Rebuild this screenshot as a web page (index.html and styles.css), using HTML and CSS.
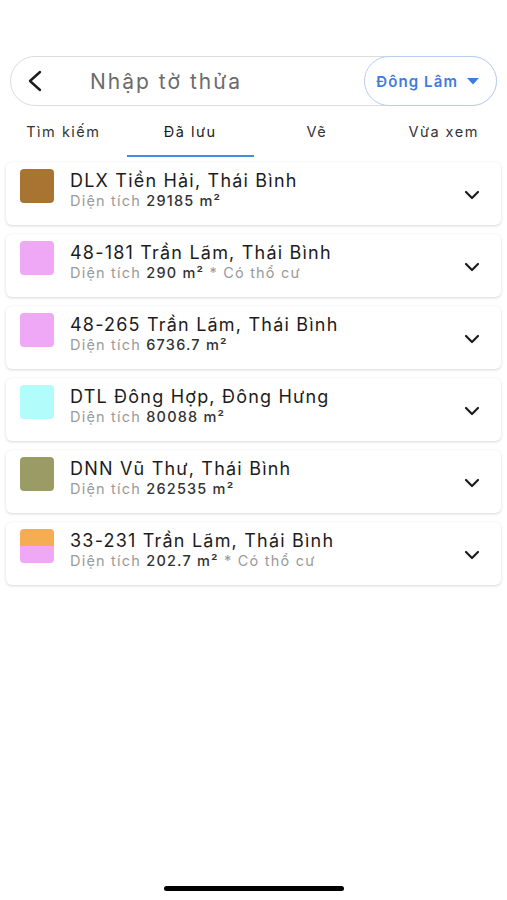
FILE: index.html
```html
<!DOCTYPE html>
<html lang="vi">
<head>
    <meta charset="UTF-8">
    <meta name="viewport" content="width=device-width, initial-scale=1.0">
    <title>Đã lưu</title>
    <link rel="stylesheet" href="styles.css">
</head>
<body>
    <div class="screen">
        <!-- Search bar -->
        <div class="search-bar">
            <button class="back-btn" aria-label="Quay lại">
                <svg width="16" height="22" viewBox="0 0 16 22"><path d="M13 2 L3 11 L13 20" fill="none" stroke="#1c1c1c" stroke-width="2.4" stroke-linecap="round" stroke-linejoin="round"/></svg>
            </button>
            <input class="search-input" type="text" placeholder="Nhập tờ thửa">
            <button class="area-btn">
                <span>Đông Lâm</span>
                <svg width="12" height="7" viewBox="0 0 12 7"><path d="M0 0 H12 L6 6.5 Z" fill="#3f7be0"/></svg>
            </button>
        </div>

        <!-- Tabs -->
        <div class="tabs">
            <div class="tab">Tìm kiếm</div>
            <div class="tab active">Đã lưu</div>
            <div class="tab">Vẽ</div>
            <div class="tab">Vừa xem</div>
        </div>

        <!-- Saved list -->
        <div class="list">
            <div class="card">
                <div class="card-main">
                    <div class="swatch" style="background: #a87432;"></div>
                    <div class="info">
                        <div class="title">DLX Tiền Hải, Thái Bình</div>
                        <div class="sub">Diện tích <b>29185 m²</b></div>
                    </div>
                </div>
                <svg class="chev" width="16" height="10" viewBox="0 0 16 10"><path d="M2 2 L8 8 L14 2" fill="none" stroke="#1c1c1c" stroke-width="2.2" stroke-linecap="round" stroke-linejoin="round"/></svg>
            </div>
            <div class="card">
                <div class="card-main">
                    <div class="swatch" style="background: #eea8f5;"></div>
                    <div class="info">
                        <div class="title">48-181 Trần Lãm, Thái Bình</div>
                        <div class="sub">Diện tích <b>290 m²</b> * Có thổ cư</div>
                    </div>
                </div>
                <svg class="chev" width="16" height="10" viewBox="0 0 16 10"><path d="M2 2 L8 8 L14 2" fill="none" stroke="#1c1c1c" stroke-width="2.2" stroke-linecap="round" stroke-linejoin="round"/></svg>
            </div>
            <div class="card">
                <div class="card-main">
                    <div class="swatch" style="background: #eea8f5;"></div>
                    <div class="info">
                        <div class="title">48-265 Trần Lãm, Thái Bình</div>
                        <div class="sub">Diện tích <b>6736.7 m²</b></div>
                    </div>
                </div>
                <svg class="chev" width="16" height="10" viewBox="0 0 16 10"><path d="M2 2 L8 8 L14 2" fill="none" stroke="#1c1c1c" stroke-width="2.2" stroke-linecap="round" stroke-linejoin="round"/></svg>
            </div>
            <div class="card">
                <div class="card-main">
                    <div class="swatch" style="background: #b2fcfb;"></div>
                    <div class="info">
                        <div class="title">DTL Đông Hợp, Đông Hưng</div>
                        <div class="sub">Diện tích <b>80088 m²</b></div>
                    </div>
                </div>
                <svg class="chev" width="16" height="10" viewBox="0 0 16 10"><path d="M2 2 L8 8 L14 2" fill="none" stroke="#1c1c1c" stroke-width="2.2" stroke-linecap="round" stroke-linejoin="round"/></svg>
            </div>
            <div class="card">
                <div class="card-main">
                    <div class="swatch" style="background: #9b9b66;"></div>
                    <div class="info">
                        <div class="title">DNN Vũ Thư, Thái Bình</div>
                        <div class="sub">Diện tích <b>262535 m²</b></div>
                    </div>
                </div>
                <svg class="chev" width="16" height="10" viewBox="0 0 16 10"><path d="M2 2 L8 8 L14 2" fill="none" stroke="#1c1c1c" stroke-width="2.2" stroke-linecap="round" stroke-linejoin="round"/></svg>
            </div>
            <div class="card">
                <div class="card-main">
                    <div class="swatch split">
                        <span style="background: #f4ad52;"></span>
                        <span style="background: #eea8f5;"></span>
                    </div>
                    <div class="info">
                        <div class="title">33-231 Trần Lãm, Thái Bình</div>
                        <div class="sub">Diện tích <b>202.7 m²</b> * Có thổ cư</div>
                    </div>
                </div>
                <svg class="chev" width="16" height="10" viewBox="0 0 16 10"><path d="M2 2 L8 8 L14 2" fill="none" stroke="#1c1c1c" stroke-width="2.2" stroke-linecap="round" stroke-linejoin="round"/></svg>
            </div>
        </div>

        <!-- Home indicator -->
        <div class="home-indicator"></div>
    </div>
</body>
</html>
```

FILE: styles.css
```css
body {
    margin: 0;
    padding: 0;
    font-family: 'Inter', 'Roboto', sans-serif;
    background-color: #fff;
    color: #1c1c1c;
}

.screen {
    display: flex;
    flex-direction: column;
    height: 900px;
    padding-top: 56px;
    box-sizing: border-box;
}

.search-bar {
    display: flex;
    align-items: center;
    height: 50px;
    margin: 0 10px;
    border: 1px solid #dcdcdc;
    border-radius: 25px;
    box-sizing: border-box;
}

.back-btn {
    background: none;
    border: none;
    padding: 0 0 0 16px;
    width: 50px;
    height: 100%;
    display: flex;
    align-items: center;
    cursor: pointer;
}

.search-input {
    flex: 1;
    min-width: 0;
    border: none;
    outline: none;
    background: none;
    font-family: inherit;
    font-size: 21px;
    letter-spacing: 2px;
    padding: 0 0 0 29px;
    color: #333;
}

.search-input::placeholder {
    color: #6b6b6b;
}

.area-btn {
    display: flex;
    align-items: center;
    gap: 9px;
    height: 50px;
    margin-right: -1px;
    padding: 0 17px 0 11px;
    border: 1px solid #b9ccf3;
    border-radius: 25px;
    background: #fff;
    color: #3f7be0;
    font-family: inherit;
    font-size: 15px;
    font-weight: 600;
    letter-spacing: 1.1px;
    cursor: pointer;
}

.tabs {
    display: flex;
    height: 51px;
}

.tab {
    flex: 1;
    display: flex;
    align-items: center;
    justify-content: center;
    font-size: 14.5px;
    color: #333;
    letter-spacing: 1.5px;
    border-bottom: 2px solid transparent;
    padding-top: 2px;
}

.tab.active {
    border-bottom-color: #3f8ee0;
    color: #1c1c1c;
}

.list {
    flex: 1;
    display: flex;
    flex-direction: column;
    gap: 9px;
    padding: 5px 6px 0;
}

.card {
    display: flex;
    align-items: center;
    justify-content: space-between;
    height: 63px;
    padding: 0 21px 0 14px;
    background: #fff;
    border-radius: 6px;
    box-shadow: 0 1px 3px rgba(0, 0, 0, 0.16);
    box-sizing: border-box;
}

.card-main {
    display: flex;
    align-self: flex-start;
    margin-top: 7px;
    gap: 16px;
}

.swatch {
    width: 34px;
    height: 34px;
    border-radius: 4px;
    overflow: hidden;
    display: flex;
    flex-direction: column;
    flex-shrink: 0;
}

.swatch.split span {
    flex: 1;
}

.info {
    display: flex;
    flex-direction: column;
}

.title {
    font-size: 18px;
    line-height: 22px;
    letter-spacing: 1.2px;
    color: #1c1c1c;
    margin-top: 1px;
}

.sub {
    font-size: 14.5px;
    line-height: 18px;
    letter-spacing: 1.2px;
    color: #9a9a9a;
}

.sub b {
    font-weight: 500;
    color: #333;
}

.chev {
    margin-top: 2px;
}

.home-indicator {
    align-self: center;
    width: 180px;
    height: 5px;
    border-radius: 3px;
    background: #000;
    margin-bottom: 9px;
}
```
